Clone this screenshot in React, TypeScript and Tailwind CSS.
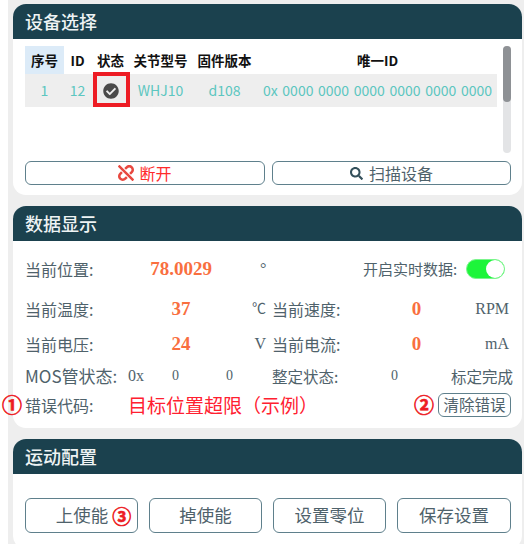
import { FaCheckCircle, FaSearch, FaUnlink } from "react-icons/fa";

const font = "font-['Noto_Sans_CJK_SC','Liberation_Sans',sans-serif]";
const serif = "font-['Liberation_Serif','Noto_Sans_CJK_SC',serif]";
const label = "text-[16px] leading-[20px] text-[#4f626b] whitespace-nowrap";
const labelSm = "text-[15.5px] leading-[20px] text-[#4f626b] whitespace-nowrap";
const value = `${serif} text-[19px] leading-[20px] font-bold text-[#f96f3f] text-center`;
const unit = `${serif} text-[16px] leading-[20px] text-[#4f626b]`;
const small = `${serif} text-[14px] leading-[20px] text-[#4f626b]`;
const mark = "text-[20px] leading-[20px] font-bold text-[#ed1c24] [-webkit-text-stroke:0.6px_#ed1c24]";
const headCell = "h-full flex items-center justify-center text-[13.5px] font-bold text-[#111] whitespace-nowrap";
const rowCell = "h-full flex items-center justify-center text-[14px] text-[#5cc6c0]";

function Card({ title, bodyClass, children }: { title: string; bodyClass: string; children: React.ReactNode }) {
  return (
    <section className={`ml-[5px] bg-white rounded-[13px] ${bodyClass}`}>
      <h2 className="h-[35px] rounded-t-[13px] bg-[#1b414e] pl-[12px] text-[18px] leading-[34px] font-medium text-[#eef3f4]">{title}</h2>
      {children}
    </section>
  );
}

function OutlineBtn({ className, children }: { className: string; children: React.ReactNode }) {
  return (
    <button className={`flex items-center justify-center border border-[#5f808c] rounded-[6px] bg-white text-[#4f626b] whitespace-nowrap ${className}`}>
      {children}
    </button>
  );
}

function DeviceTable() {
  return (
    <div className="flex ml-[12px] mt-[7px] h-[107px]">
      <div className="w-[472px] relative">
        <div className="flex h-[28px]">
          <div className={`${headCell} w-[39px] bg-[#dcebf8]`}>序号</div>
          <div className={`${headCell} w-[27px]`}>ID</div>
          <div className={`${headCell} w-[39px]`}>状态</div>
          <div className={`${headCell} w-[61px]`}>关节型号</div>
          <div className={`${headCell} w-[67px]`}>固件版本</div>
          <div className={`${headCell} flex-1`}>唯一ID</div>
        </div>
        <div className="flex h-[33px] bg-[#eeeeee]">
          <div className={`${rowCell} w-[39px]`}>1</div>
          <div className={`${rowCell} w-[27px]`}>12</div>
          <div className={`${rowCell} w-[39px]`}>
            <FaCheckCircle className="text-[16px] text-[#4a4a4a]" />
          </div>
          <div className={`${rowCell} w-[61px]`}>WHJ10</div>
          <div className={`${rowCell} w-[67px]`}>d108</div>
          <div className={`${rowCell} flex-1 whitespace-nowrap text-[14.5px] [word-spacing:1.5px]`}>0x 0000 0000 0000 0000 0000 0000</div>
        </div>
        <div className="absolute left-[68px] top-[26px] w-[37px] h-[35px] border-[4px] border-[#ed1c24]" />
      </div>
      <div className="ml-[6px] w-[8px] h-[107px] rounded-[4px] bg-[#e3e4e6]">
        <div className="h-[56px] rounded-[4px] bg-[#8e9195]" />
      </div>
    </div>
  );
}

export default function App() {
  return (
    <div className={`${font} w-[524px] h-[544px] overflow-hidden bg-white pl-[8px]`}>
      <div className="h-full bg-[#eeeeee] pt-[4px] pr-[2px]">
        <Card title="设备选择" bodyClass="h-[191px]">
          <DeviceTable />
          <div className="flex gap-[7px] ml-[12px] mt-[8px]">
            <OutlineBtn className="w-[240px] h-[24px] gap-[5px] text-[16px] text-[#ff2a2a]">
              <FaUnlink className="text-[16px] text-[#e8483f]" />
              断开
            </OutlineBtn>
            <OutlineBtn className="w-[239px] h-[24px] gap-[6px] text-[16px]">
              <FaSearch className="text-[13px] text-[#34505b]" />
              扫描设备
            </OutlineBtn>
          </div>
        </Card>

        <div className="h-[11px]" />

        <Card title="数据显示" bodyClass="h-[222px]">
          <div className="pl-[12px] pr-[9px]">
            <div className="flex items-center h-[20px] mt-[18px]">
              <span className={`${label} w-[124px]`}>当前位置:</span>
              <span className={`${value} w-[64px]`}>78.0029</span>
              <span className={`${unit} w-[150px] pl-[47px]`}>°</span>
              <span className="w-[103px] text-[15px] leading-[20px] text-[#4f626b] whitespace-nowrap">开启实时数据:</span>
              <div className="w-[39px] h-[20px] rounded-full bg-[#1df53a] flex justify-end border border-[#7bf58c]">
                <div className="w-[18px] h-[18px] rounded-full bg-white" />
              </div>
            </div>

            <div className="flex items-center h-[20px] mt-[20px]">
              <span className={`${label} w-[124px]`}>当前温度:</span>
              <span className={`${value} w-[64px]`}>37</span>
              <span className={`${small} w-[53px] text-right`}>℃</span>
              <span className={`${label} w-[143px] pl-[6px]`}>当前速度:</span>
              <span className={`${value} w-[15px]`}>0</span>
              <span className={`${unit} w-[85px] text-right`}>RPM</span>
            </div>

            <div className="flex items-center h-[20px] mt-[15px]">
              <span className={`${label} w-[124px]`}>当前电压:</span>
              <span className={`${value} w-[64px]`}>24</span>
              <span className={`${unit} w-[53px] text-right`}>V</span>
              <span className={`${label} w-[143px] pl-[6px]`}>当前电流:</span>
              <span className={`${value} w-[15px]`}>0</span>
              <span className={`${unit} w-[85px] text-right`}>mA</span>
            </div>

            <div className="flex items-center h-[20px] mt-[12px]">
              <span className="w-[103px] text-[17px] leading-[20px] text-[#4f626b] whitespace-nowrap">MOS管状态:</span>
              <span className={`${unit} w-[44px]`}>0x</span>
              <span className={`${small} w-[54px]`}>0</span>
              <span className={`${small} w-[46px]`}>0</span>
              <span className={`${labelSm} w-[119px]`}>整定状态:</span>
              <span className={`${small} w-[60px]`}>0</span>
              <span className={labelSm}>标定完成</span>
            </div>

            <div className="flex items-center h-[24px] mt-[7px] relative">
              <span className={`${mark} absolute left-[-23px]`}>①</span>
              <span className={`${label} w-[103px]`}>错误代码:</span>
              <span className="w-[286px] text-[19px] leading-[22px] text-[#ff2030] whitespace-nowrap">目标位置超限（示例）</span>
              <span className={`${mark} w-[24px]`}>②</span>
              <OutlineBtn className="w-[73px] h-[24px] text-[15.5px]">清除错误</OutlineBtn>
            </div>
          </div>
        </Card>

        <div className="h-[11px]" />

        <Card title="运动配置" bodyClass="h-[110px]">
          <div className="flex gap-[11px] ml-[12px] mt-[24px]">
            <OutlineBtn className="w-[113px] h-[35px] text-[17.5px] pl-[24px] gap-[4px]">
              上使能
              <span className="text-[19px] leading-[20px] font-bold text-[#ed1c24] [-webkit-text-stroke:0.6px_#ed1c24]">③</span>
            </OutlineBtn>
            <OutlineBtn className="w-[113px] h-[35px] text-[17.5px]">掉使能</OutlineBtn>
            <OutlineBtn className="w-[113px] h-[35px] text-[17.5px]">设置零位</OutlineBtn>
            <OutlineBtn className="w-[114px] h-[35px] text-[17.5px]">保存设置</OutlineBtn>
          </div>
        </Card>
      </div>
    </div>
  );
}
